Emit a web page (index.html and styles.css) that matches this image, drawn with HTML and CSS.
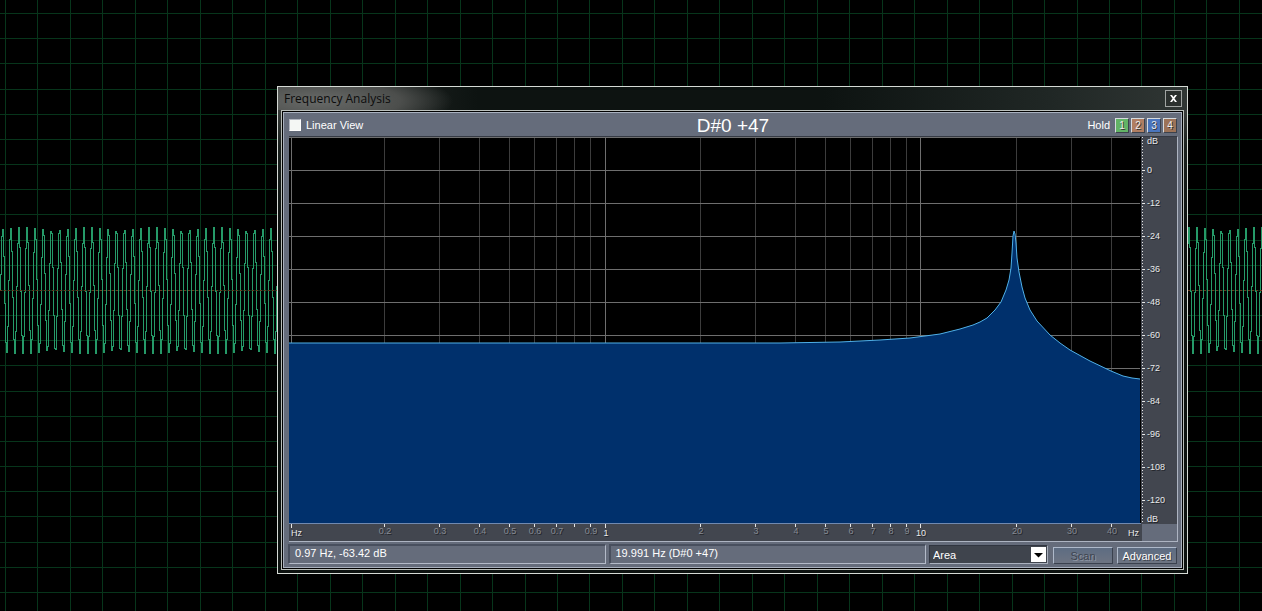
FILE: index.html
```html
<!DOCTYPE html>
<html lang="en">
<head>
    <meta charset="UTF-8">
    <meta name="viewport" content="width=device-width, initial-scale=1.0">
    <title>Frequency Analysis</title>
    <link rel="stylesheet" href="styles.css">
</head>
<body>
    <svg class="wave-view" id="wave" aria-hidden="true"></svg>

    <section class="dialog">
        <header class="title-bar">
            <h1>Frequency Analysis</h1>
            <button class="close-btn" type="button" aria-label="Close">
                <svg width="7" height="7" viewBox="0 0 7 7"><path d="M0 0h2l1.500 2L5 0h2L4.500 3.500 7 7H5L3.500 5 2 7H0l2.500-3.500z" fill="#fff"/></svg>
            </button>
        </header>

        <div class="panel">
            <div class="toolbar">
                <label class="linear"><input type="checkbox" id="linear"> Linear View</label>
                <output class="note">D#0 +47</output>
                <div class="hold">
                    <span>Hold</span>
                    <button type="button" class="green">1</button>
                    <button type="button" class="brown">2</button>
                    <button type="button" class="blue">3</button>
                    <button type="button" class="tan">4</button>
                </div>
            </div>

            <svg class="chart" id="chart" viewBox="289 137 888 404"></svg>

            <footer class="status">
                <div class="readout">0.97 Hz, -63.42 dB</div>
                <div class="readout">19.991 Hz (D#0 +47)</div>
                <div class="select-box">
                    <select aria-label="Display style">
                        <option>Area</option>
                    </select>
                    <svg class="arrow" viewBox="0 0 15 15"><rect width="15" height="15" fill="#fff"/><path d="M3 6h9L7.500 10.500z" fill="#000"/></svg>
                </div>
                <button type="button" class="push" disabled>Scan</button>
                <button type="button" class="push">Advanced</button>
            </footer>
        </div>
    </section>

    <script src="script.js"></script>
</body>
</html>
```
FILE: styles.css
```css
body {
    margin: 0;
    min-height: 100vh;
    overflow: hidden;
    background: #000;
    color: #fff;
    font-family: "Liberation Sans", Arial, sans-serif;
    font-size: 11px;
}

button, select, input {
    font: inherit;
    margin: 0;
    padding: 0;
}

.wave-view {
    position: fixed;
    top: 0;
    left: 0;
    width: 100%;
    height: 100%;
    shape-rendering: crispEdges;
}

.wave-view path {
    fill: none;
}

.wave-view .grid {
    stroke: #07351b;
}

.wave-view .zero {
    stroke: #67391f;
}

.wave-view .signal {
    stroke: #259a68;
}

/* dialog window floating over the waveform */
.dialog {
    position: absolute;
    top: 86px;
    left: 277px;
    right: 74px;
    box-sizing: border-box;
    padding: 0 3px 3px;
    border: 1px solid #d5dad5;
    background: linear-gradient(#4e504e, #1a201e 60px, #0d1210 140px);
}

.title-bar {
    display: flex;
    align-items: center;
    justify-content: space-between;
    height: 23px;
    margin: 0 -3px;
    padding: 0 5px 0 6px;
    background:
        radial-gradient(ellipse 150px 36px at 40px 14px, #686a68 0, #4c4e4c 55%, transparent 90%),
        linear-gradient(90deg, #303432, #0d1311 200px, #0d1311 60%, #202725 85%, #303634);
}

.title-bar h1 {
    margin: 0;
    color: #0c0c0c;
    font-family: "Open Sans", sans-serif;
    font-size: 12px;
    font-weight: normal;
    line-height: 20px;
}

.close-btn {
    display: flex;
    align-items: center;
    justify-content: center;
    width: 17px;
    height: 17px;
    border: 1px solid #a0a4a2;
    background: #2b302e;
}

.panel {
    padding: 0 3px 3px 5px;
    border: 1px solid #b9beba;
    outline: 1px solid #a8b0be;
    outline-offset: -3px;
    background: #656c7b;
    box-shadow: inset 0 0 0 1px #000;
}

.toolbar {
    display: grid;
    grid-template-columns: 1fr auto 1fr;
    align-items: center;
    height: 25px;
    padding: 0 3px 0 2px;
}

.linear {
    display: flex;
    align-items: center;
    gap: 5px;
    padding-top: 2px;
}

.linear input {
    appearance: none;
    width: 12px;
    height: 12px;
    border: 1px solid;
    border-color: #b0b5bf #fff #fff #b0b5bf;
    background: #f4f7f4;
}

.note {
    padding-top: 4px;
    font-size: 19px;
    line-height: 20px;
}

.hold {
    display: flex;
    align-items: center;
    justify-content: flex-end;
    gap: 2px;
    padding-top: 3px;
}

.hold span {
    margin-right: 3px;
}

.hold button {
    width: 14px;
    height: 15px;
    border: 1px solid;
    border-color: #d5dade #3c424c #3c424c #d5dade;
    color: #eee;
    font-size: 10px;
    line-height: 13px;
    text-shadow: 1px 1px #333;
}

.hold .green {
    background: #62b366;
}

.hold .brown {
    background: #b07e62;
}

.hold .blue {
    background: #4a75bd;
}

.hold .tan {
    background: #9c7358;
}

.chart {
    display: block;
    box-sizing: border-box;
    width: calc(100% - 4px);
    margin-left: 2px;
    border: solid;
    border-width: 1px 1px 1px 0;
    border-color: #353a44 #adb4c2 #adb4c2 #353a44;
    font-size: 9px;
}

.chart .plot {
    fill: #000;
}

.chart .axis {
    fill: #42464f;
}

.chart .major {
    stroke: #6e6e6e;
}

.chart .minor {
    stroke: #3c3c3c;
}

.chart .edge {
    stroke: #7089b0;
}

.chart .tick {
    stroke: #e6e6e6;
}

.chart .lines {
    fill: none;
    shape-rendering: crispEdges;
}

.chart .area {
    fill: #00306c;
}

.chart .curve {
    fill: none;
    stroke: #4fb0e8;
}

.chart text {
    fill: #e8eaec;
    text-shadow: 1px 1px #22252b;
}

.chart .dim {
    fill: #858a93;
}

.chart .middle {
    text-anchor: middle;
}

.status {
    display: flex;
    align-items: flex-end;
    gap: 4px;
    padding: 2px 3px 2px 1px;
}

.readout {
    flex: 1;
    box-sizing: border-box;
    height: 20px;
    margin-right: -1px;
    padding: 0 5px;
    border: solid;
    border-width: 2px 1px 1px 2px;
    border-color: #484f5e #b3bac8 #b3bac8 #484f5e;
    line-height: 15px;
}

.select-box {
    position: relative;
    width: 119px;
    height: 19px;
    margin-right: 1px;
}

.select-box select {
    appearance: none;
    display: block;
    width: 100%;
    height: 100%;
    padding: 0 18px 0 3px;
    border: 1px solid;
    border-color: #303540 #a9b0bd #a9b0bd #303540;
    border-radius: 0;
    background: #3f444d;
    color: #fff;
}

.arrow {
    position: absolute;
    top: 2px;
    right: 2px;
    width: 15px;
    height: 15px;
    pointer-events: none;
}

.push {
    width: 60px;
    height: 17px;
    border: 1px solid;
    border-color: #aeb9ca #3a414e #3a414e #aeb9ca;
    background: linear-gradient(#5d6c82, #6d7482);
    color: #fff;
    text-shadow: 1px 1px #3a3f49;
}

.push:disabled {
    color: #3d434e;
    text-shadow: 1px 1px #8f97a5;
}
```
FILE: script.js
```js
// waveform behind the dialog
const wave = document.getElementById('wave');

function drawWave() {
    const w = window.innerWidth;
    const h = window.innerHeight;
    let grid = '';
    for (let i = 0; 5 + i * 32.47 < w; i++) {
        grid += `M${Math.round(5 + i * 32.47) + 0.5} 0V${h}`;
    }
    for (let i = 0; 13 + i * 25.17 < h; i++) {
        grid += `M0 ${Math.round(13 + i * 25.17) + 0.5}H${w}`;
    }
    // one vertical run per pixel column
    let signal = 'M0.5 290';
    for (let x = 0; x <= w; x++) {
        const y = 290 - 63 * Math.cos((x - 1.7) / 8.125 * 2 * Math.PI);
        signal += `H${x + 0.5}V${Math.round(y) + 0.5}`;
    }
    wave.innerHTML = `
        <path class="grid" d="${grid}"/>
        <path class="signal" d="${signal}"/>
        <path class="zero" stroke-dasharray="2 2" d="M0 290.5H${w}"/>
    `;
}

// frequency axis: [position, label, major]
const freqs = [
    [291, '', 1], [384, '0.2'], [439, '0.3'], [479, '0.4'], [509, '0.5'],
    [534, '0.6'], [556, '0.7'], [574, ''], [590, '0.9'], [605, '1', 1],
    [700, '2'], [755, '3'], [795, '4'], [825, '5'], [850, '6'], [872, '7'],
    [890, '8'], [906, '9'], [920, '10', 1], [1016, '20'], [1071, '30'], [1111, '40']
];

const curve = [
    [289, 343], [605, 343], [780, 343], [840, 342], [880, 340], [910, 338],
    [940, 334], [960, 329], [973, 325], [980, 322], [987, 318], [995, 310],
    [1001, 302], [1006, 290], [1009, 280], [1011, 268], [1012, 253],
    [1013, 236], [1014, 231], [1015, 234], [1016, 243], [1017, 258],
    [1019, 272], [1022, 287], [1025, 298], [1030, 310], [1037, 321],
    [1050, 335], [1060, 343], [1070, 350], [1090, 361], [1111, 371],
    [1123, 376], [1132, 378], [1140, 379]
];

function drawChart() {
    let minor = '', major = 'M289 137.5H1140', ticks = '', labels = '';

    freqs.forEach(([x, label, isMajor]) => {
        const line = `M${x + 0.5} 137V523`;
        if (isMajor) major += line;
        else minor += line;
        ticks += `M${x + 0.5} 524v${isMajor ? 4 : 3}`;
        labels += `<text class="middle ${isMajor ? '' : 'dim'}" x="${x + 1}" y="${isMajor ? 536 : 534}">${label}</text>`;
    });

    for (let db = 0; db >= -120; db -= 12) {
        const y = 170 - db * 2.75;
        major += `M289 ${y + 0.5}H1140`;
        ticks += `M1142 ${y + 0.5}h3`;
        labels += `<text x="1147" y="${y + 3}">${db}</text>`;
    }

    const points = curve.map(p => p.join(' ')).join('L');
    document.getElementById('chart').innerHTML = `
        <rect class="plot" x="289" y="137" width="852" height="387"/>
        <rect class="axis" x="1141" y="137" width="36" height="387"/>
        <rect class="axis" x="289" y="524" width="853" height="17"/>
        <g class="lines">
            <path class="minor" d="${minor}"/>
            <path class="major" d="${major}"/>
        </g>
        <path class="area" d="M${points}V523H289z"/>
        <path class="curve" d="M${points}"/>
        <g class="lines">
            <path class="edge" d="M289 523.5H1141"/>
            <path class="tick" d="${ticks}"/>
            <path class="tick" stroke-dasharray="1 2" d="M1142.5 137V523"/>
        </g>
        ${labels}
        <text x="291" y="536">Hz</text>
        <text x="1128" y="536">Hz</text>
        <text x="1147" y="144">dB</text>
        <text x="1147" y="522">dB</text>
    `;
}

drawWave();
drawChart();
window.addEventListener('resize', drawWave);
```
